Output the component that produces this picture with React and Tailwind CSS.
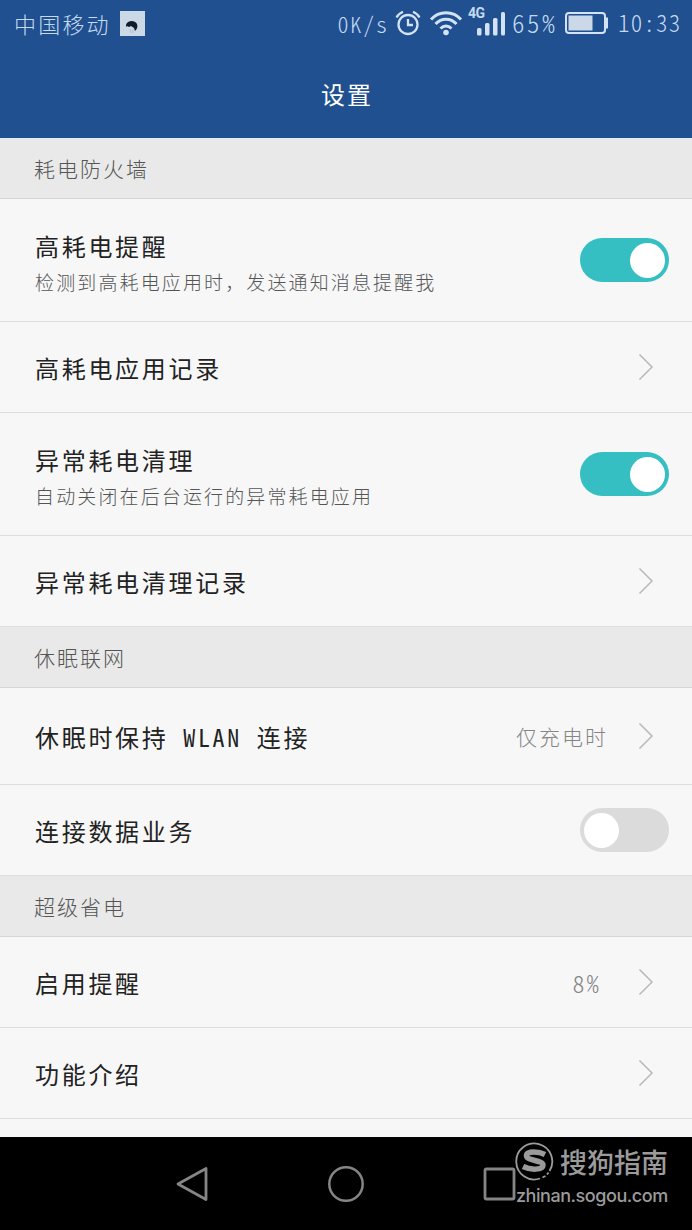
import clsx from "clsx";

const Chevron = () => (
    <svg className="mr-[38px] h-[28px] w-[16px] shrink-0" viewBox="0 0 16 28" fill="none">
        <path d="M1.5 1.5 14 14 1.5 26.5" stroke="#b9b9b9" strokeWidth="1.5" />
    </svg>
);

const Switch = ({ on }) => (
    <div
        className={clsx(
            "mr-[23px] flex h-[44px] w-[89px] shrink-0 items-center rounded-full px-1",
            on ? "justify-end bg-[#36bfc3]" : "bg-[#dbdbdb]"
        )}
    >
        <div className="size-[35px] rounded-full bg-white" />
    </div>
);

const SectionTitle = ({ children }) => (
    <div className="flex h-[61px] items-center border-b border-[#d6d6d6] bg-[#e9e9e9] pt-0.5 pl-[34px] text-[21px] tracking-[2px] text-[#555]">
        {children}
    </div>
);

const Row = ({ title, note, value, valueClass, height = "h-[91px]", children }) => (
    <div className={clsx("flex items-center border-b border-[#dedede] bg-[#f7f7f7] pl-[35px]", height)}>
        <div className={clsx("flex-1", note ? "pt-[6px]" : "pt-px")}>
            <div className="text-[24px] leading-[36px] font-normal tracking-[2.7px] whitespace-pre text-[#222]">
                {title}
            </div>
            {note && (
                <div className="text-[19px] leading-[35px] tracking-[2.13px] whitespace-nowrap text-[#555] [font-feature-settings:normal]">
                    {note}
                </div>
            )}
        </div>
        {value && <span className={clsx("pt-px text-[#858585]", valueClass)}>{value}</span>}
        {children}
    </div>
);

const StatusBar = () => (
    <div className="flex h-[48px] items-center pl-[14px] text-[22px] tracking-[2.2px] text-[#c5daf2]">
        <span className="-mt-0.5">中国移动</span>
        <svg className="ml-[9px] size-[25px] -translate-y-px" viewBox="0 0 25 25">
            <path d="M0 0h25v25H0z" fill="#cbd8e6" />
            <path d="M6 14c1-4 8-6 11-1 1 3 0 5-2 7l-1-3-3-2-2 1-2-1-1 1z" fill="#101c26" />
            <path d="m10 18 1 4m2-4v4" stroke="#a9bac9" strokeWidth=".8" />
        </svg>
        <span className="-mt-0.5 ml-auto tracking-[1.9px]">0K/s</span>
        <svg className="-mt-0.5 ml-[6px] h-[26px] w-[26px]" viewBox="0 0 26 26" fill="none" stroke="#d3e2f5" strokeWidth="2.3">
            <circle cx="13" cy="14.5" r="9.500" />
            <path d="M13 9v6h5M1.500 7.500C3 4.500 5 3 8 1.700M24.500 7.500C23 4.500 21 3 18 1.700" />
        </svg>
        <svg className="-mt-0.5 ml-[8px] h-[26px] w-[34px]" viewBox="0 0 34 26" fill="none" stroke="#d3e2f5" strokeWidth="3">
            <path d="M2 9.500C10 .500 24 .500 32 9.500M6.500 14C12.500 7.500 21.500 7.500 27.500 14M11.500 18.500C15 15 19 15 22.500 18.500" />
            <circle cx="17" cy="22.500" r="2.800" fill="#d3e2f5" stroke="none" />
        </svg>
        <div className="relative -mt-1 ml-[5px] h-[30px] w-[40px]">
            <span className="absolute top-[-2px] left-0 font-['Roboto',sans-serif] text-[14px] leading-[16px] font-bold tracking-[-0.5px] [font-feature-settings:normal]">
                4G
            </span>
            <svg className="absolute top-[4px] left-[9px] h-[25px] w-[28px]" viewBox="0 0 28 25" fill="#d3e2f5">
                <rect x="0" y="17" width="4.500" height="7.500" rx="1.500" />
                <rect x="8" y="12" width="4.500" height="12.500" rx="1.500" />
                <rect x="16" y="7" width="4.500" height="17.500" rx="1.500" />
                <rect x="24" y="1" width="4" height="23.500" rx="1.500" />
            </svg>
        </div>
        <span className="-mt-0.5 ml-[4px] w-[47px] text-[25px] tracking-[2.6px]">65%</span>
        <svg className="-mt-0.5 ml-[6px] h-[22px] w-[43px]" viewBox="0 0 43 22">
            <rect x="1" y="1" width="39" height="20" rx="3" fill="none" stroke="#d3e2f5" strokeWidth="2" />
            <path d="M3.500 3.500h24v15h-24z" fill="#cbd8e8" />
            <path d="M40 5.500h3v11h-3z" fill="#d3e2f5" />
        </svg>
        <span className="-mt-1 mr-[10px] ml-[10px] w-[64px] text-[23px] tracking-[1.2px]">10:33</span>
    </div>
);

const NavigationBar = () => (
    <div className="relative flex h-[93px] items-center bg-black">
        <svg className="ml-[176px] size-[36px]" viewBox="0 0 36 36" fill="none" stroke="#858585" strokeWidth="2.800">
            <path d="M2 18 30 2.500v31z" strokeLinejoin="round" />
        </svg>
        <svg className="ml-[116px] size-[36px]" viewBox="0 0 36 36" fill="none" stroke="#858585" strokeWidth="2.500">
            <circle cx="18" cy="18" r="16.700" />
        </svg>
        <svg className="ml-[118px] size-[36px]" viewBox="0 0 36 36" fill="none" stroke="#858585" strokeWidth="2.800">
            <rect x="3" y="3" width="29" height="30" rx="1.500" />
        </svg>
        <div className="absolute top-[5px] left-[515px] text-[#9b9b9b]">
            <div className="flex items-center">
                <svg className="size-[39px]" viewBox="0 0 39 39" fill="none" stroke="#9b9b9b">
                    <path d="M25 36.500A18 18 0 1 1 34.500 29M27.500 35.500l3-1.500M32 32.500l1.500-2" strokeWidth="1.800" />
                    <path
                        d="M30 12.500C24 9.500 11 8.500 11.500 14c.5 5 16.500 4 16.500 9 0 5.500-13 5-20 1.500"
                        strokeWidth="5.500"
                    />
                </svg>
                <span className="ml-[6px] text-[27px] leading-[39px] font-medium">搜狗指南</span>
            </div>
            <div className="mt-[3px] ml-px font-['Inter',sans-serif] text-[18px] leading-[24px] font-medium tracking-[-0.45px] [font-feature-settings:normal]">
                zhinan.sogou.com
            </div>
        </div>
    </div>
);

const App = () => {
    return (
        <div className="flex h-[1230px] w-[692px] flex-col overflow-hidden bg-[#f7f7f7] font-['Noto_Sans_CJK_SC',sans-serif] font-light [font-feature-settings:'hwid']">
            <header className="h-[138px] bg-[#20508f]">
                <StatusBar />
                <h1 className="pt-[26px] pl-[2px] text-center text-[24px] leading-[40px] font-normal tracking-[2px] text-white">
                    设置
                </h1>
            </header>

            <main className="flex-1">
                <SectionTitle>耗电防火墙</SectionTitle>
                <Row title="高耗电提醒" note="检测到高耗电应用时，发送通知消息提醒我" height="h-[123px]">
                    <Switch on />
                </Row>
                <Row title="高耗电应用记录">
                    <Chevron />
                </Row>
                <Row title="异常耗电清理" note="自动关闭在后台运行的异常耗电应用" height="h-[123px]">
                    <Switch on />
                </Row>
                <Row title="异常耗电清理记录">
                    <Chevron />
                </Row>

                <SectionTitle>休眠联网</SectionTitle>
                <Row
                    title="休眠时保持 WLAN 连接"
                    value="仅充电时"
                    valueClass="mr-[30px] text-[21px] tracking-[2px]"
                    height="h-[97px]"
                >
                    <Chevron />
                </Row>
                <Row title="连接数据业务">
                    <Switch />
                </Row>

                <SectionTitle>超级省电</SectionTitle>
                <Row title="启用提醒" value="8%" valueClass="mr-[37px] text-[24px] tracking-[2.2px]">
                    <Chevron />
                </Row>
                <Row title="功能介绍">
                    <Chevron />
                </Row>
            </main>

            <NavigationBar />
        </div>
    );
};

export default App;
